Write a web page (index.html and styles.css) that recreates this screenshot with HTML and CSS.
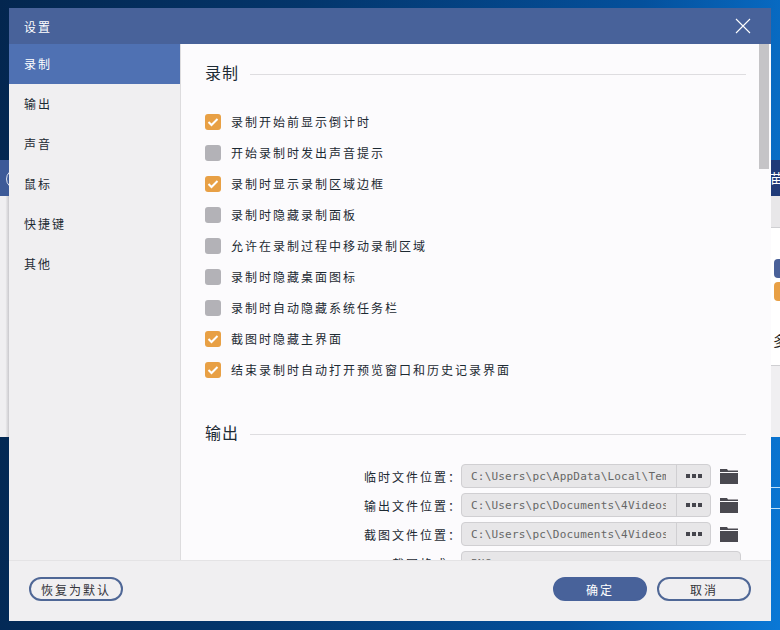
FILE: index.html
```html
<!DOCTYPE html>
<html lang="zh-CN">
  <head>
    <meta charset="UTF-8" />
    <title>设置</title>
    <link rel="stylesheet" href="styles.css">
  </head>
  <body>
    <div class="streak one"></div>
    <div class="streak two"></div>

    <div class="back-window">
      <div class="back-bar"><span class="back-ring"></span><span class="back-bar-text">苗</span></div>
      <div class="back-top"></div>
      <div class="back-body">
        <span class="back-btn blue"></span>
        <span class="back-btn orange"></span>
        <span class="back-text">多</span>
      </div>
      <div class="back-left"></div>
    </div>

    <div class="dialog">
      <header class="title-bar">
        <span>设置</span>
        <svg class="close" width="16" height="16" viewBox="0 0 16 16">
          <path d="M1 1L15 15M15 1L1 15" stroke="#fff" stroke-width="1.1" fill="none" />
        </svg>
      </header>

      <div class="main">
        <nav class="side">
          <div class="side-item active">录制</div>
          <div class="side-item">输出</div>
          <div class="side-item">声音</div>
          <div class="side-item">鼠标</div>
          <div class="side-item">快捷键</div>
          <div class="side-item">其他</div>
        </nav>

        <div class="content">
          <div class="section-title"><h2>录制</h2><i></i></div>
          <ul class="checks">
            <li><span class="box on"><svg width="12" height="10" viewBox="0 0 12 10"><path d="M1.5 5L4.5 8L10.5 2" /></svg></span>录制开始前显示倒计时</li>
            <li><span class="box"></span>开始录制时发出声音提示</li>
            <li><span class="box on"><svg width="12" height="10" viewBox="0 0 12 10"><path d="M1.5 5L4.5 8L10.5 2" /></svg></span>录制时显示录制区域边框</li>
            <li><span class="box"></span>录制时隐藏录制面板</li>
            <li><span class="box"></span>允许在录制过程中移动录制区域</li>
            <li><span class="box"></span>录制时隐藏桌面图标</li>
            <li><span class="box"></span>录制时自动隐藏系统任务栏</li>
            <li><span class="box on"><svg width="12" height="10" viewBox="0 0 12 10"><path d="M1.5 5L4.5 8L10.5 2" /></svg></span>截图时隐藏主界面</li>
            <li><span class="box on"><svg width="12" height="10" viewBox="0 0 12 10"><path d="M1.5 5L4.5 8L10.5 2" /></svg></span>结束录制时自动打开预览窗口和历史记录界面</li>
          </ul>

          <div class="section-title second"><h2>输出</h2><i></i></div>
          <div class="rows">
            <div class="row">
              <label>临时文件位置：</label>
              <div class="path"><span>C:\Users\pc\AppData\Local\Temp</span><b><u></u><u></u><u></u></b></div>
              <svg class="folder" width="18" height="15" viewBox="0 0 18 15"><path d="M0 0H7L8 1.5H18V3H0ZM0 4H18V15H0Z" /></svg>
            </div>
            <div class="row">
              <label>输出文件位置：</label>
              <div class="path"><span>C:\Users\pc\Documents\4Videosoft</span><b><u></u><u></u><u></u></b></div>
              <svg class="folder" width="18" height="15" viewBox="0 0 18 15"><path d="M0 0H7L8 1.5H18V3H0ZM0 4H18V15H0Z" /></svg>
            </div>
            <div class="row">
              <label>截图文件位置：</label>
              <div class="path"><span>C:\Users\pc\Documents\4Videosoft</span><b><u></u><u></u><u></u></b></div>
              <svg class="folder" width="18" height="15" viewBox="0 0 18 15"><path d="M0 0H7L8 1.5H18V3H0ZM0 4H18V15H0Z" /></svg>
            </div>
            <div class="row">
              <label>截图格式：</label>
              <div class="path wide"><span>PNG</span></div>
            </div>
          </div>
          <div class="scrollbar"></div>
        </div>
      </div>

      <footer class="foot">
        <button class="btn">恢复为默认</button>
        <div class="foot-right">
          <button class="btn primary">确定</button>
          <button class="btn">取消</button>
        </div>
      </footer>
    </div>
  </body>
</html>
```

FILE: styles.css
```css
html,
body {
  margin: 0;
  height: 100%;
}
body {
  width: 780px;
  height: 630px;
  position: relative;
  overflow: hidden;
  font-family: "Noto Sans CJK SC", "Liberation Sans", sans-serif;
  background: linear-gradient(97deg, #03264f 0%, #03356b 35%, #04509c 75%, #0a78d6 100%);
}

/* desktop wallpaper streaks, right edge */
.streak {
  position: absolute;
  left: 771px;
  width: 9px;
  height: 1px;
  background: #bfe0f8;
}
.streak.one {
  top: 487px;
}
.streak.two {
  top: 508px;
}

/* window behind the dialog */
.back-window {
  position: absolute;
  left: 0;
  top: 160px;
  width: 780px;
  height: 277px;
  display: flex;
  flex-direction: column;
  background: #f0eff1;
}
.back-bar {
  height: 36px;
  flex: none;
  position: relative;
  background: linear-gradient(90deg, #3d5a98 0%, #3d5a98 50%, #1f3a78 50%, #1f3a78 100%);
  color: #fff;
  font-size: 13px;
}
.back-ring {
  position: absolute;
  left: 6px;
  top: 9px;
  width: 18px;
  height: 18px;
  border: 1px solid #dfe5f2;
  border-radius: 50%;
}
.back-bar-text {
  position: absolute;
  left: 770px;
  top: 8px;
}
.back-top {
  height: 31px;
  flex: none;
  background: #e8e7e9;
  border-bottom: 1px solid #cfcfd2;
}
.back-body {
  position: relative;
  height: 137px;
  flex: none;
  background: #fff;
  border-bottom: 1px solid #cfcfd2;
}
.back-left {
  position: absolute;
  left: 0;
  top: 36px;
  width: 9px;
  height: 241px;
  background: linear-gradient(90deg, #f0eff1 0%, #f0eff1 60%, #c9c8cc 100%);
}
.back-btn {
  position: absolute;
  left: 774px;
  width: 12px;
  height: 19px;
  border-radius: 4px;
}
.back-btn.blue {
  top: 31px;
  background: #4a6199;
}
.back-btn.orange {
  top: 54px;
  background: #e8a045;
}
.back-text {
  position: absolute;
  left: 773px;
  top: 102px;
  font-size: 14px;
  color: #222;
}

.dialog {
  position: absolute;
  left: 9px;
  top: 8px;
  width: 762px;
  height: 613px;
  display: flex;
  flex-direction: column;
  background: #f0eff1;
}
.title-bar {
  height: 36px;
  flex: none;
  display: flex;
  align-items: center;
  justify-content: space-between;
  padding: 0 20px 0 15px;
  background: #48629a;
  color: #fff;
  font-size: 12px;
  letter-spacing: 2px;
}
.close {
  display: block;
}

.main {
  flex: 1;
  display: flex;
  min-height: 0;
}
.side {
  width: 171px;
  flex: none;
  border-right: 1px solid #dddcde;
}
.side-item {
  height: 40px;
  line-height: 40px;
  padding-left: 15px;
  font-size: 12px;
  letter-spacing: 2px;
  color: #1d2a33;
}
.side-item.active {
  background: #4f71b3;
  color: #fff;
}

.content {
  flex: 1;
  position: relative;
  overflow: hidden;
  padding: 16px 0 0 24px;
  background: #fcfbfd;
}
.section-title {
  display: flex;
  align-items: center;
  gap: 11px;
  width: 541px;
  height: 24px;
}
.section-title.second {
  margin-top: 35px;
}
.section-title h2 {
  margin: 0;
  font-size: 16px;
  font-weight: 400;
  letter-spacing: 1px;
  color: #1d2a33;
}
.section-title i {
  flex: 1;
  height: 1px;
  margin-top: 4px;
  background: #dedde0;
}

.checks {
  list-style: none;
  margin: 22px 0 0;
  padding: 0;
}
.checks li {
  height: 31px;
  display: flex;
  align-items: center;
  gap: 10px;
  font-size: 12px;
  letter-spacing: 2px;
  color: #1d2a33;
}
.box {
  width: 16px;
  height: 16px;
  flex: none;
  display: flex;
  align-items: center;
  justify-content: center;
  border-radius: 3px;
  background: #b3b2b7;
}
.box.on {
  background: #e8a045;
}
.box path {
  fill: none;
  stroke: #fff;
  stroke-width: 2;
}

.rows {
  margin-top: 20px;
  display: flex;
  flex-direction: column;
  gap: 5px;
}
.row {
  height: 24px;
  display: flex;
  align-items: center;
}
.row label {
  width: 257px;
  margin-right: -1px;
  flex: none;
  text-align: right;
  font-size: 12px;
  letter-spacing: 2px;
  color: #1d2a33;
}
.path {
  width: 250px;
  height: 24px;
  flex: none;
  box-sizing: border-box;
  display: flex;
  align-items: center;
  border: 1px solid #d0cfd2;
  border-radius: 4px;
  background: #e7e6e8;
  font-family: "DejaVu Sans Mono", "Liberation Mono", monospace;
  font-size: 11px;
  letter-spacing: 0.2px;
  color: #666;
}
.path.wide {
  width: 280px;
}
.path span {
  flex: 1;
  padding-left: 9px;
  margin-right: 10px;
  overflow: hidden;
  white-space: nowrap;
}
.path b {
  width: 33px;
  height: 100%;
  flex: none;
  display: flex;
  align-items: center;
  justify-content: center;
  gap: 2px;
  border-left: 1px solid #d0cfd2;
}
.path u {
  width: 4px;
  height: 4px;
  background: #45454d;
}
.folder {
  margin-left: 9px;
  fill: #4a4950;
}
.scrollbar {
  position: absolute;
  right: 2px;
  top: 0;
  width: 10px;
  height: 125px;
  background: #c5c4c7;
}

.foot {
  height: 61px;
  flex: none;
  box-sizing: border-box;
  display: flex;
  align-items: flex-start;
  justify-content: space-between;
  padding: 16px 20px 0 20px;
  border-top: 1px solid #e4e3e5;
}
.foot-right {
  display: flex;
  gap: 10px;
}
.btn {
  width: 94px;
  height: 24px;
  padding: 0;
  box-sizing: border-box;
  border: 2px solid #4f6796;
  border-radius: 12px;
  background: transparent;
  font-family: inherit;
  font-size: 12px;
  letter-spacing: 2px;
  color: #33343a;
}
.btn.primary {
  background: #48629a;
  border-color: #48629a;
  color: #fff;
}
```
